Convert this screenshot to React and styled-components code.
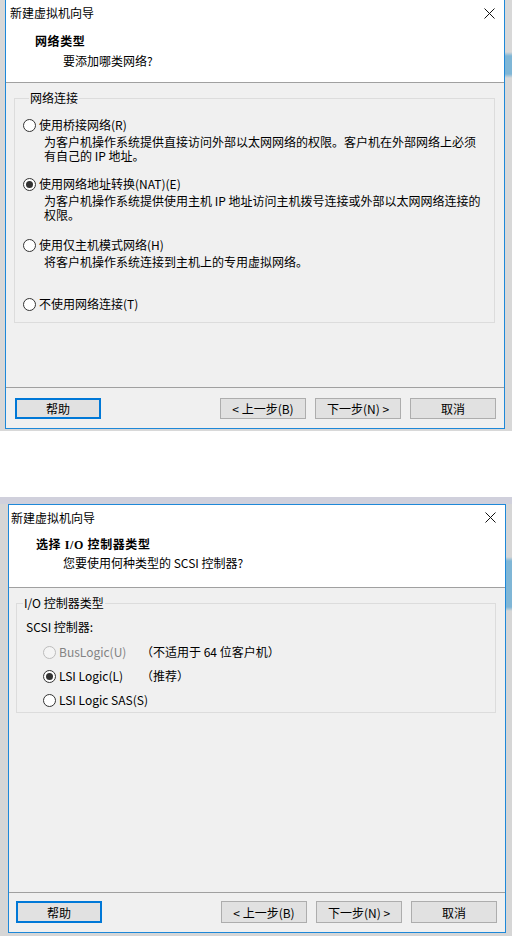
import React from 'react';
import styled, { createGlobalStyle } from 'styled-components';

const Global = createGlobalStyle`
  html, body { margin: 0; padding: 0; background: #fff; }
  body {
    font-family: "Noto Sans CJK SC", "Noto Sans", sans-serif;
    font-size: 12px;
    color: #000;
  }
`;

const Page = styled.div`
  width: 520px;
  display: flex;
  flex-direction: column;
  align-items: flex-start;
`;

const Shot = styled.div`
  width: 512px;
  box-sizing: border-box;
  display: flex;
  padding: ${p => p.$pad};
  margin-top: ${p => p.$mt || 0}px;
  background: ${p => p.$bg};
`;

const Dialog = styled.section`
  flex: 1;
  height: 429px;
  box-sizing: border-box;
  border: 1px solid #1e88d8;
  ${p => (p.$cutTop ? 'border-top: none;' : '')}
  background: #f0f0f0;
  display: flex;
  flex-direction: column;
`;

const TitleBar = styled.div`
  height: ${p => p.$h}px;
  flex: none;
  background: #fff;
  display: flex;
  align-items: center;
  justify-content: space-between;
  padding: 0 9px 0 ${p => p.$pl}px;
  line-height: 14px;
`;

const Header = styled.header`
  height: ${p => p.$h}px;
  flex: none;
  box-sizing: border-box;
  background: #fff;
  border-bottom: 1px solid #a0a0a0;
  padding: ${p => p.$pt}px 0 0 ${p => p.$pl}px;
`;

const HeaderTitle = styled.div`
  font-family: "Liberation Serif", "Noto Sans CJK SC", serif;
  font-weight: bold;
  font-size: 12px;
  letter-spacing: 0.6px;
  line-height: 14px;
  height: 14px;
`;

const HeaderSub = styled.div`
  line-height: 14px;
  height: 14px;
  margin: ${p => p.$mt}px 0 0 ${p => p.$ml}px;
`;

const Body = styled.div`
  flex: 1;
  padding: ${p => p.$pad};
  min-height: 0;
`;

const GroupBox = styled.fieldset`
  margin: 0;
  min-width: 0;
  border: 1px solid #dcdcdc;
  padding: ${p => p.$pad};
`;

const Legend = styled.legend`
  padding: 0 1px;
  margin-left: 6px;
  line-height: 14px;
`;

const Option = styled.div`
  margin-top: ${p => p.$mt}px;
`;

const Row = styled.label`
  display: flex;
  align-items: center;
  line-height: 14px;
  height: 14px;
  white-space: nowrap;
  color: ${p => (p.$disabled ? '#838383' : '#000')};
`;

const Radio = styled.span`
  width: 13px;
  height: 13px;
  box-sizing: border-box;
  border-radius: 50%;
  border: 1px solid ${p => (p.$disabled ? '#bcbcbc' : '#333')};
  background: ${p => (p.$disabled ? '#f4f4f4' : '#fff')};
  margin-right: ${p => p.$gap}px;
  flex: none;
  display: flex;
  align-items: center;
  justify-content: center;
  &::after {
    content: '';
    width: 7px;
    height: 7px;
    border-radius: 50%;
    background: #333;
    display: ${p => (p.$checked ? 'block' : 'none')};
  }
`;

const DescBlock = styled.div`
  margin: 3px 0 0 ${p => p.$ml}px;
`;

const DescLine = styled.div`
  line-height: 14px;
  height: 14px;
  white-space: nowrap;
`;

const Caption = styled.div`
  line-height: 14px;
  height: 14px;
  margin-left: ${p => p.$ml}px;
`;

const RadioGrid = styled.div`
  display: grid;
  grid-template-columns: 98px auto;
  grid-auto-rows: 14px;
  row-gap: 10px;
  margin: 11px 0 0 26px;
  line-height: 14px;
`;

const Note = styled.span`
  line-height: 14px;
  white-space: nowrap;
`;

const Footer = styled.footer`
  flex: none;
  border-top: 1px solid #a0a0a0;
  display: flex;
  gap: 9px;
  padding: ${p => p.$pad};
`;

const Button = styled.button`
  width: 86px;
  height: ${p => p.$h}px;
  box-sizing: border-box;
  margin: 0;
  margin-right: ${p => (p.$push ? 'auto' : '0')};
  padding: 0;
  font: inherit;
  font-size: 12px;
  color: #000;
  background: #e1e1e1;
  border: ${p => (p.$focus ? '2px solid #0078d7' : '1px solid #adadad')};
  display: flex;
  align-items: center;
  justify-content: center;
`;

const CloseIcon = () => (
  <svg width="11" height="11" viewBox="0 0 11 11">
    <path d="M0.5 0.5 L10.5 10.5 M10.5 0.5 L0.5 10.5" stroke="#111" strokeWidth="1" fill="none" />
  </svg>
);

const Buttons = ({ h }) => (
  <>
    <Button $h={h} $focus $push>帮助</Button>
    <Button $h={h}>&lt; 上一步(B)</Button>
    <Button $h={h}>下一步(N) &gt;</Button>
    <Button $h={h}>取消</Button>
  </>
);

const netOptions = [
  {
    label: '使用桥接网络(R)',
    mt: 13,
    desc: ['为客户机操作系统提供直接访问外部以太网网络的权限。客户机在外部网络上必须', '有自己的 IP 地址。'],
  },
  {
    label: '使用网络地址转换(NAT)(E)',
    mt: 14,
    checked: true,
    desc: ['为客户机操作系统提供使用主机 IP 地址访问主机拨号连接或外部以太网网络连接的', '权限。'],
  },
  {
    label: '使用仅主机模式网络(H)',
    mt: 16,
    desc: ['将客户机操作系统连接到主机上的专用虚拟网络。'],
  },
  { label: '不使用网络连接(T)', mt: 28, desc: [] },
];

const scsiOptions = [
  { label: 'BusLogic(U)', note: '（不适用于 64 位客户机）', disabled: true },
  { label: 'LSI Logic(L)', note: '（推荐）', checked: true },
  { label: 'LSI Logic SAS(S)', note: '' },
];

const strip = (from, to) =>
  `linear-gradient(180deg, transparent ${from - 4}px, #7fb6d6 ${from}px, #7fb6d6 ${to}px, transparent ${to + 4}px) right top / 7px 100% no-repeat`;

export default function App() {
  return (
    <Page>
      <Global />
      <Shot $pad="0 7px 2px 5px" $bg={`${strip(56, 74)}, #d8d8d8`}>
        <Dialog $cutTop>
          <TitleBar $h={26} $pl={4}>
            <span>新建虚拟机向导</span>
            <CloseIcon />
          </TitleBar>
          <Header $h={57} $pt={9} $pl={29}>
            <HeaderTitle>网络类型</HeaderTitle>
            <HeaderSub $mt={5} $ml={28}>要添加哪类网络?</HeaderSub>
          </Header>
          <Body $pad="8px 9px 0 8px">
            <GroupBox $pad="0 0 11px 8px">
              <Legend>网络连接</Legend>
              {netOptions.map(o => (
                <Option key={o.label} $mt={o.mt}>
                  <Row>
                    <Radio $checked={o.checked} $gap={3} />
                    {o.label}
                  </Row>
                  {o.desc.length > 0 && (
                    <DescBlock $ml={21}>
                      {o.desc.map(line => (
                        <DescLine key={line}>{line}</DescLine>
                      ))}
                    </DescBlock>
                  )}
                </Option>
              ))}
            </GroupBox>
          </Body>
          <Footer $pad="10px 8px 9px 9px">
            <Buttons h={21} />
          </Footer>
        </Dialog>
      </Shot>

      <Shot
        $mt={66}
        $pad="7px 6px 3px 8px"
        $bg={`linear-gradient(180deg, #d0d0dc 0px, #d0d0dc 7px, transparent 7px), ${strip(64, 110)}, #d6d6d6`}
      >
        <Dialog>
          <TitleBar $h={25} $pl={2}>
            <span>新建虚拟机向导</span>
            <CloseIcon />
          </TitleBar>
          <Header $h={58} $pt={8} $pl={27}>
            <HeaderTitle>选择 I/O 控制器类型</HeaderTitle>
            <HeaderSub $mt={4} $ml={27}>您要使用何种类型的 SCSI 控制器?</HeaderSub>
          </Header>
          <Body $pad="8px 9px 0 7px">
            <GroupBox $pad="10px 0 5px 0">
              <Legend>I/O 控制器类型</Legend>
              <Caption $ml={9}>SCSI 控制器:</Caption>
              <RadioGrid>
                {scsiOptions.map(o => (
                  <React.Fragment key={o.label}>
                    <Row $disabled={o.disabled}>
                      <Radio $checked={o.checked} $disabled={o.disabled} $gap={3} />
                      {o.label}
                    </Row>
                    <Note>{o.note}</Note>
                  </React.Fragment>
                ))}
              </RadioGrid>
            </GroupBox>
          </Body>
          <Footer $pad="8px 8px 9px 7px">
            <Buttons h={22} />
          </Footer>
        </Dialog>
      </Shot>
    </Page>
  );
}
